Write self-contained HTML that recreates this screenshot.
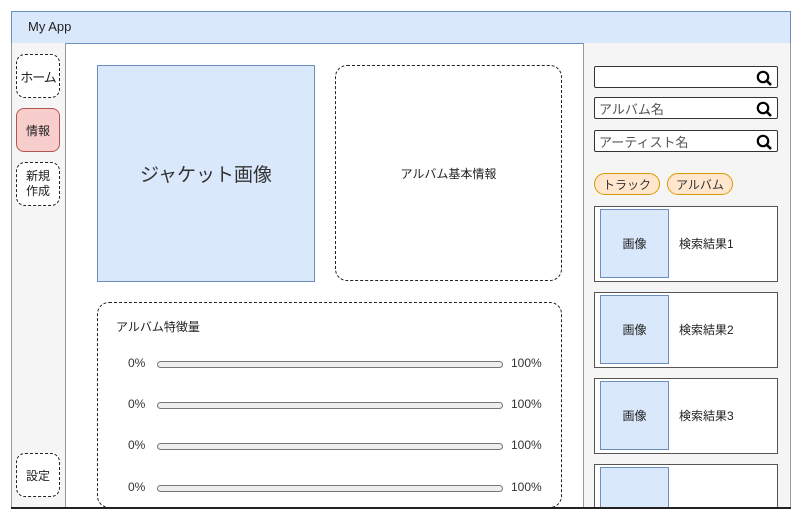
<!DOCTYPE html>
<html><head><meta charset="utf-8"><style>
*{box-sizing:border-box;margin:0;padding:0}
body{width:800px;height:520px;background:#fff;position:relative;overflow:hidden;font-family:"Liberation Sans","Noto Sans CJK JP",sans-serif;color:#222;font-size:12px}
.a{position:absolute}
.c{display:flex;align-items:center;justify-content:center;text-align:center}
.dash{border:1.3px dashed #222;border-radius:9px;background:#fff}
.srch{background:#fff;border:1px solid #333;border-radius:2px;font-size:13px;color:#555;padding-left:4px;display:flex;align-items:center}
.srch svg{position:absolute;right:3px;top:3px}
.chip{background:#ffe6cc;border:1px solid #d79b00;border-radius:11px;font-size:12px;color:#333}
.card{background:#fff;border:1px solid #555}
.img{background:#dae8fc;border:1px solid #6c8ebf}
.track{height:7px;border:1px solid #777;border-radius:4px;background:#eee}
.pct{font-size:12px;color:#333}
</style></head><body>
<div class="a" style="left:11px;top:11px;width:780px;height:498px;border:1px solid #999;border-bottom:1.5px solid #222"></div>
<div class="a" style="left:11px;top:11px;width:780px;height:33px;background:#dae8fc;border:1px solid #6c8ebf;font-size:13px;padding:7px 0 0 16px">My App</div>
<div class="a" style="left:11px;top:43px;width:55px;height:465px;background:#f5f5f5;border-left:1px solid #999;border-right:1px solid #999"></div>
<div class="a dash c" style="left:16px;top:54px;width:44px;height:44px;font-size:13px;letter-spacing:-1px">ホーム</div>
<div class="a c" style="left:16px;top:108px;width:44px;height:44px;background:#f8cecc;border:1px solid #b85450;border-radius:8px">情報</div>
<div class="a dash c" style="left:16px;top:162px;width:44px;height:44px;line-height:15px">新規<br>作成</div>
<div class="a dash c" style="left:16px;top:453px;width:44px;height:44px">設定</div>

<div class="a img c" style="left:97px;top:65px;width:218px;height:217px;font-size:19px;color:#333">ジャケット画像</div>
<div class="a dash c" style="left:335px;top:65px;width:227px;height:216px;border-radius:12px">アルバム基本情報</div>
<div class="a dash" style="left:97px;top:302px;width:465px;height:206px;border-radius:12px"></div>
<div class="a" style="left:116px;top:318px;font-size:12px">アルバム特徴量</div>

<div class="a pct" style="left:128px;top:356px">0%</div><div class="a track" style="left:157px;top:361px;width:346px"></div><div class="a pct" style="left:511px;top:356px">100%</div>
<div class="a pct" style="left:128px;top:397px">0%</div><div class="a track" style="left:157px;top:402px;width:346px"></div><div class="a pct" style="left:511px;top:397px">100%</div>
<div class="a pct" style="left:128px;top:438px">0%</div><div class="a track" style="left:157px;top:443px;width:346px"></div><div class="a pct" style="left:511px;top:438px">100%</div>
<div class="a pct" style="left:128px;top:480px">0%</div><div class="a track" style="left:157px;top:485px;width:346px"></div><div class="a pct" style="left:511px;top:480px">100%</div>

<div class="a" style="left:583px;top:43px;width:208px;height:465px;background:#f5f5f5;border-left:1px solid #999;border-right:1px solid #999"></div>
<div class="a srch" style="left:594px;top:66px;width:184px;height:22px"><svg width="18" height="16" viewBox="0 0 18 16"><circle cx="7" cy="7" r="5.2" fill="none" stroke="#000" stroke-width="2.2"/><line x1="10.5" y1="10.5" x2="15" y2="15" stroke="#000" stroke-width="2.6"/></svg></div>
<div class="a srch" style="left:594px;top:97px;width:184px;height:22px">アルバム名<svg width="18" height="16" viewBox="0 0 18 16"><circle cx="7" cy="7" r="5.2" fill="none" stroke="#000" stroke-width="2.2"/><line x1="10.5" y1="10.5" x2="15" y2="15" stroke="#000" stroke-width="2.6"/></svg></div>
<div class="a srch" style="left:594px;top:130px;width:184px;height:22px">アーティスト名<svg width="18" height="16" viewBox="0 0 18 16"><circle cx="7" cy="7" r="5.2" fill="none" stroke="#000" stroke-width="2.2"/><line x1="10.5" y1="10.5" x2="15" y2="15" stroke="#000" stroke-width="2.6"/></svg></div>
<div class="a chip c" style="left:594px;top:173px;width:66px;height:22px">トラック</div>
<div class="a chip c" style="left:667px;top:173px;width:66px;height:22px">アルバム</div>

<div class="a card" style="left:594px;top:206px;width:184px;height:76px"></div>
<div class="a img c" style="left:600px;top:209px;width:69px;height:69px">画像</div>
<div class="a" style="left:679px;top:235px">検索結果1</div>
<div class="a card" style="left:594px;top:292px;width:184px;height:76px"></div>
<div class="a img c" style="left:600px;top:295px;width:69px;height:69px">画像</div>
<div class="a" style="left:679px;top:321px">検索結果2</div>
<div class="a card" style="left:594px;top:378px;width:184px;height:76px"></div>
<div class="a img c" style="left:600px;top:381px;width:69px;height:69px">画像</div>
<div class="a" style="left:679px;top:407px">検索結果3</div>
<div class="a card" style="left:594px;top:464px;width:184px;height:44px;border-bottom:none"></div>
<div class="a img" style="left:600px;top:467px;width:69px;height:41px;border-bottom:none"></div>
<div class="a" style="left:11px;top:507px;width:780px;height:2px;background:#222"></div>
</body></html>
